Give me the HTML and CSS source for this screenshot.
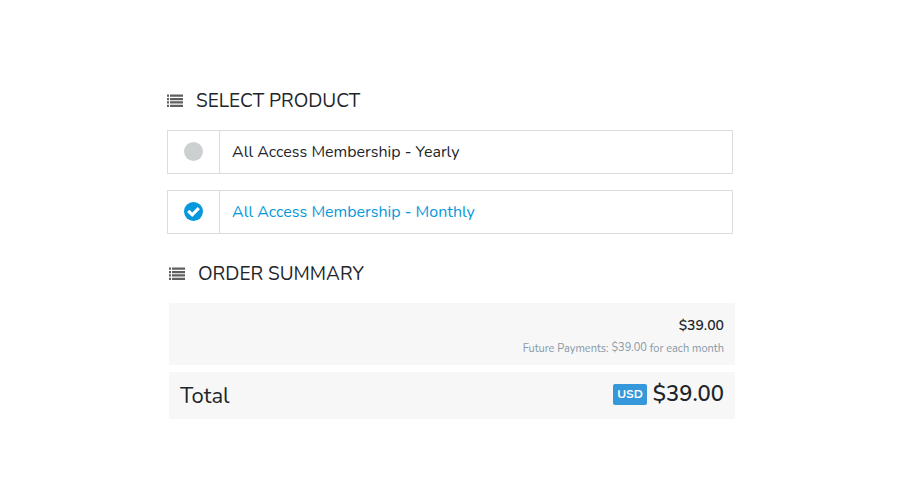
FILE: index.html
```html
<!DOCTYPE html>
<html lang="en">
<head>
  <meta charset="UTF-8" />
  <meta name="viewport" content="width=device-width, initial-scale=1.0" />
  <title>Checkout</title>
  <link rel="stylesheet" href="styles.css">
</head>
<body>
  <main class="checkout">
    <section class="products">
      <h2 class="heading">
        <svg class="list-icon" viewBox="0 0 16 14" aria-hidden="true">
          <path d="M0 .5h2v2.2H0zM3 .5h13v2.2H3zM0 4h2v2.2H0zM3 4h13v2.2H3zM0 7.3h2v2.2H0zM3 7.3h13v2.2H3zM0 10.8h2V13H0zM3 10.8h13V13H3z"/>
        </svg>
        Select Product
      </h2>
      <label class="product" for="yearly">
        <span class="product-check">
          <input type="radio" name="product" id="yearly" />
        </span>
        <span class="product-name">All Access Membership - Yearly</span>
      </label>
      <label class="product" for="monthly">
        <span class="product-check">
          <input type="radio" name="product" id="monthly" checked />
          <svg class="tick" viewBox="0 0 18 18" aria-hidden="true">
            <path d="M4 8.5l3.8 3.6 6.2-6.2"/>
          </svg>
        </span>
        <span class="product-name">All Access Membership - Monthly</span>
      </label>
    </section>

    <section class="summary">
      <h2 class="heading">
        <svg class="list-icon" viewBox="0 0 16 14" aria-hidden="true">
          <path d="M0 .5h2v2.2H0zM3 .5h13v2.2H3zM0 4h2v2.2H0zM3 4h13v2.2H3zM0 7.3h2v2.2H0zM3 7.3h13v2.2H3zM0 10.8h2V13H0zM3 10.8h13V13H3z"/>
        </svg>
        Order Summary
      </h2>
      <div class="line-item">
        <p class="price">$39.00</p>
        <p class="future">Future Payments: <span class="future-price">$39.00</span> for each month</p>
      </div>
      <div class="total">
        <span class="total-label">Total</span>
        <span class="currency">USD</span>
        <strong class="total-price">$39.00</strong>
      </div>
    </section>
  </main>
</body>
</html>
```

FILE: styles.css
```css
* {
  margin: 0;
  padding: 0;
  box-sizing: border-box;
}
body {
  font-family: Nunito, "Open Sans", "Noto Sans", sans-serif;
  font-size: 16px;
  color: #212529;
  background-color: #fff;
}
.checkout {
  max-width: 570px;
  margin: 0 auto;
  padding-top: 87px;
}
.products {
  margin: 0 2px;
}
.summary {
  margin: 26px 0 0 4px;
}
.heading {
  display: flex;
  align-items: center;
  gap: 13px;
  margin-bottom: 15px;
  font-size: 19px;
  font-weight: 400;
  line-height: 28px;
  text-transform: uppercase;
}
.list-icon {
  width: 16px;
  height: 14px;
  fill: #5f5f5f;
}
.product {
  display: flex;
  height: 44px;
  margin-bottom: 16px;
  border: 1px solid #dcdcdc;
  cursor: pointer;
}
.product-check {
  display: grid;
  place-items: center;
  width: 52px;
  padding-bottom: 1px;
  border-right: 1px solid #dcdcdc;
}
.product-check input,
.tick {
  grid-area: 1 / 1;
  width: 19px;
  height: 19px;
}
.product-check input {
  appearance: none;
  border-radius: 50%;
  background-color: #cdd0d1;
}
.product-check input:checked {
  background-color: #0698dc;
}
.tick {
  fill: none;
  stroke: #fff;
  stroke-width: 3;
  pointer-events: none;
}
.product-name {
  padding-left: 12px;
  font-weight: 400;
  line-height: 42px;
}
.product:has(input:checked) .product-name {
  color: #0698dc;
}
.line-item {
  padding: 12px 11px 5px;
  background-color: #f7f7f7;
  text-align: right;
}
.price {
  font-size: 14px;
  font-weight: 600;
  line-height: 21px;
}
.future {
  font-size: 11px;
  line-height: 23px;
  color: #8799a8;
}
.future-price {
  vertical-align: 1px;
}
.total {
  display: flex;
  align-items: center;
  gap: 6px;
  margin-top: 7px;
  padding: 6px 11px 8px;
  background-color: #f7f7f7;
}
.total-label {
  margin-right: auto;
  padding-top: 4px;
  font-size: 22px;
  font-weight: 400;
  line-height: 29px;
}
.currency {
  padding: 0 4px;
  border-radius: 2px;
  background-color: #3498db;
  color: #fff;
  font-size: 12px;
  font-weight: 700;
  line-height: 21px;
}
.total-price {
  font-size: 22px;
  font-weight: 600;
  line-height: 33px;
}
```
